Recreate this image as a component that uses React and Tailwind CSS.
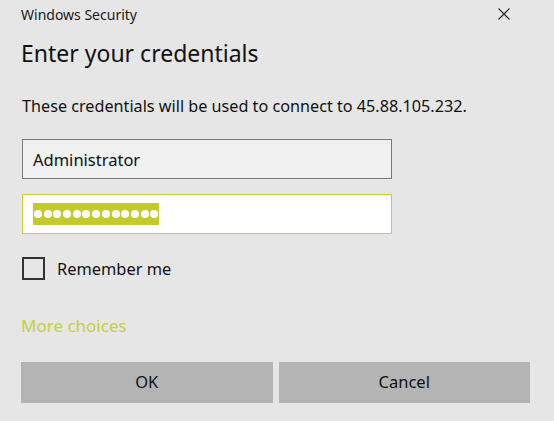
import React from 'react';

const App = () => {
    return (
        <div className="w-[554px] h-[421px] bg-[#e6e6e6] text-black overflow-hidden" style={{ fontFamily: '"Noto Sans", "Open Sans", sans-serif' }}>
            {/* title bar */}
            <div className="flex items-start justify-between h-[30px] pl-[21px] pr-[44px] pt-[5px]">
                <span className="text-[14px] leading-[20px] text-[#1a1a1a]">Windows Security</span>
                <svg width="12" height="12" viewBox="0 0 12 12" className="mt-[3px]">
                    <path d="M0.5 0.5 L11.5 11.5 M11.5 0.5 L0.5 11.5" stroke="#222" strokeWidth="1.1" fill="none" />
                </svg>
            </div>

            <div className="px-[21px]">
                <h1 className="text-[23px] leading-[30px] mt-[8px] font-normal text-[#111]">Enter your credentials</h1>
                <p className="text-[16.2px] leading-[20px] mt-[28px] ml-[1px] text-[#111] whitespace-nowrap">
                    These credentials will be used to connect to 45.88.105.232.
                </p>

                {/* user name */}
                <div className="mt-[23px] ml-[1px] w-[370px] h-[40px] border border-[#7a7a7a] bg-[#f0f0f0] flex items-center px-[10px] pt-[2px]">
                    <span className="text-[16.5px] text-[#111]">Administrator</span>
                </div>

                {/* password */}
                <div className="mt-[15px] ml-[1px] w-[370px] h-[40px] border border-[#c8cf3a] bg-white flex items-center px-[10px]">
                    <span className="bg-[#c3cb2c] h-[22px] flex items-center gap-[1.7px] px-[1px]">
                        {Array.from({ length: 13 }).map((_, i) => (
                            <span key={i} className="w-[8px] h-[8px] rounded-full bg-white" />
                        ))}
                    </span>
                </div>

                {/* remember me */}
                <div className="mt-[22px] ml-[1px] flex items-center gap-[12px]">
                    <span className="w-[23px] h-[23px] border-2 border-[#333] bg-[#e6e6e6]" />
                    <span className="text-[16.4px] text-[#111] pt-[1px]">Remember me</span>
                </div>

                <div className="mt-[33px] text-[17px] leading-[22px] text-[#c5d040]">More choices</div>

                {/* buttons */}
                <div className="mt-[25px] flex gap-[6px] w-[509px]">
                    <button className="flex-1 h-[41px] bg-[#b4b4b4] text-[16.5px] text-[#111]">OK</button>
                    <button className="flex-1 h-[41px] bg-[#b4b4b4] text-[16.5px] text-[#111]">Cancel</button>
                </div>
            </div>
        </div>
    );
};

export default App;
